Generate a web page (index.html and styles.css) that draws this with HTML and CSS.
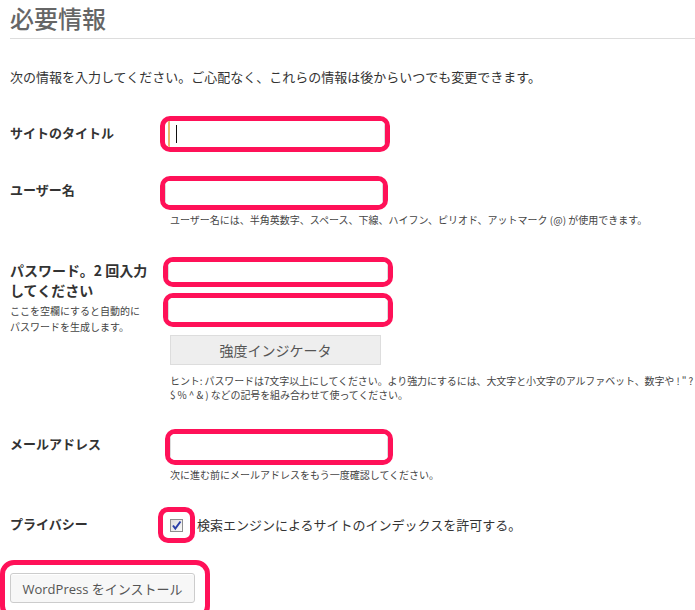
FILE: index.html
```html
<!DOCTYPE html>
<html lang="ja">
<head>
    <meta charset="UTF-8">
    <meta name="viewport" content="width=device-width, initial-scale=1.0">
    <title>WordPress インストール</title>
    <link rel="stylesheet" href="styles.css">
</head>
<body>

    <div class="page">
        <h1 class="title">必要情報</h1>
        <p class="intro">次の情報を入力してください。ご心配なく、これらの情報は後からいつでも変更できます。</p>

        <div class="row row-site">
            <label class="label">サイトのタイトル</label>
            <div class="field">
                <span class="mark mark-site">
                    <input type="text" class="focused">
                    <span class="caret"></span>
                </span>
            </div>
        </div>

        <div class="row row-user">
            <label class="label">ユーザー名</label>
            <div class="field">
                <span class="mark mark-user"><input type="text"></span>
                <p class="desc">ユーザー名には、半角英数字、スペース、下線、ハイフン、ピリオド、アットマーク (@) が使用できます。</p>
            </div>
        </div>

        <div class="row row-pass">
            <div class="label">
                <label class="label-big">パスワード。2 回入力<br>してください</label>
                <p class="label-note">ここを空欄にすると自動的に<br>パスワードを生成します。</p>
            </div>
            <div class="field">
                <span class="mark mark-pass1"><input type="password"></span>
                <span class="mark mark-pass2"><input type="password"></span>
                <div class="strength">強度インジケータ</div>
                <p class="desc hint">ヒント: パスワードは7文字以上にしてください。より強力にするには、大文字と小文字のアルファベット、数字や ! " ?<br>$ % ^ &amp; ) などの記号を組み合わせて使ってください。</p>
            </div>
        </div>

        <div class="row row-mail">
            <label class="label">メールアドレス</label>
            <div class="field">
                <span class="mark mark-mail"><input type="text"></span>
                <p class="desc">次に進む前にメールアドレスをもう一度確認してください。</p>
            </div>
        </div>

        <div class="row row-privacy">
            <label class="label">プライバシー</label>
            <div class="field check-line">
                <span class="mark mark-check">
                    <span class="checkbox">
                        <svg width="11" height="11" viewBox="0 0 11 11"><path d="M2 5.5 L4.3 8.5 L9.5 1.5" fill="none" stroke="#2a3fa8" stroke-width="2"/></svg>
                    </span>
                </span>
                <span class="check-text">検索エンジンによるサイトのインデックスを許可する。</span>
            </div>
        </div>

        <div class="submit">
            <span class="mark mark-button">
                <button type="button">WordPress をインストール</button>
            </span>
        </div>
    </div>

</body>
</html>
```

FILE: styles.css
```css
body { margin: 0; font-family: "Noto Sans CJK JP", sans-serif; color: #333; background: #fff; overflow: hidden; }
.page { padding-left: 10px; }

.title {
    margin: 3px 0 0; padding-bottom: 5px; font-size: 24px; line-height: 30px;
    font-weight: 500; color: #666; border-bottom: 1px solid #ddd;
}
.intro { margin: 28px 0 0; font-size: 13px; line-height: 20px; }

.row { display: grid; grid-template-columns: 150px 1fr; }
.label { font-size: 13px; line-height: 20px; font-weight: bold; color: #333; }
.label-big { display: block; font-size: 14px; line-height: 20px; font-weight: bold; }
.label-note { margin: 3px 0 0; font-size: 10px; line-height: 16px; font-weight: normal; color: #444; }

.row-site { margin-top: 29px; }
.row-site .label { padding-top: 7px; }
.row-user { margin-top: 24px; }
.row-user .label { padding-top: 4px; }
.row-pass { margin-top: 30px; }
.row-pass .label { padding-top: 3px; }
.row-mail { margin-top: 27px; }
.row-mail .label { padding-top: 5px; }
.row-privacy { margin-top: 25px; }
.row-privacy .label { padding-top: 7px; }

.mark {
    display: block; position: relative; box-sizing: border-box; background: #fff;
    border: 5px solid #ff1158; border-radius: 10px; overflow: hidden;
}
.mark input {
    display: block; box-sizing: border-box; width: 100%; height: 100%; margin: 0; padding: 0 6px;
    border: none; border-left: 1px solid #ddd; border-right: 1px solid #ddd; outline: none;
    background: #fff; font-size: 14px;
}
.mark input.focused { width: calc(100% - 3px); margin-left: 3px; border-left: 2px solid #e8b86a; }
.caret { position: absolute; left: 11px; top: 4px; width: 1px; height: 18px; background: #111; }

.mark-site { width: 230px; height: 36px; }
.mark-user { width: 228px; height: 34px; }
.mark-pass1 { width: 230px; height: 30px; margin-left: 3px; }
.mark-pass2 { width: 230px; height: 34px; margin-left: 3px; margin-top: 6px; }
.mark-mail { width: 228px; height: 36px; margin-left: 5px; }

.desc { margin: 3px 0 0; padding-left: 10px; font-size: 10px; line-height: 14px; color: #444; }
.hint { margin-top: 9px; white-space: nowrap; letter-spacing: -0.1px; }

.strength {
    box-sizing: border-box; width: 211px; height: 30px; margin: 8px 0 0 10px;
    background: #eee; border: 1px solid #ddd; color: #555;
    font-size: 14px; line-height: 28px; text-align: center;
}

.check-line { display: flex; align-items: center; }
.mark-check {
    display: flex; align-items: center; justify-content: center;
    width: 37px; height: 36px; margin-left: -2px; flex: none;
}
.checkbox {
    display: flex; align-items: center; justify-content: center; box-sizing: border-box;
    width: 13px; height: 13px; border: 1px solid #8e8f8f;
    background: linear-gradient(135deg, #dcdcdc, #fafafa);
}
.check-text { margin-left: 2px; font-size: 13px; line-height: 20px; }

.submit { margin-top: 17px; }
.mark-button {
    width: 210px; height: 60px; margin-left: -10px; padding: 8px 0 0 5px;
    border-radius: 14px;
}
.submit button {
    display: block; width: 185px; height: 30px; padding: 0;
    font-family: "Open Sans", "Noto Sans CJK JP", sans-serif; font-size: 13px; color: #555;
    background: #f7f7f7; border: 1px solid #ccc; border-radius: 3px;
    box-shadow: inset 0 1px 0 #fff; cursor: pointer;
}
```
